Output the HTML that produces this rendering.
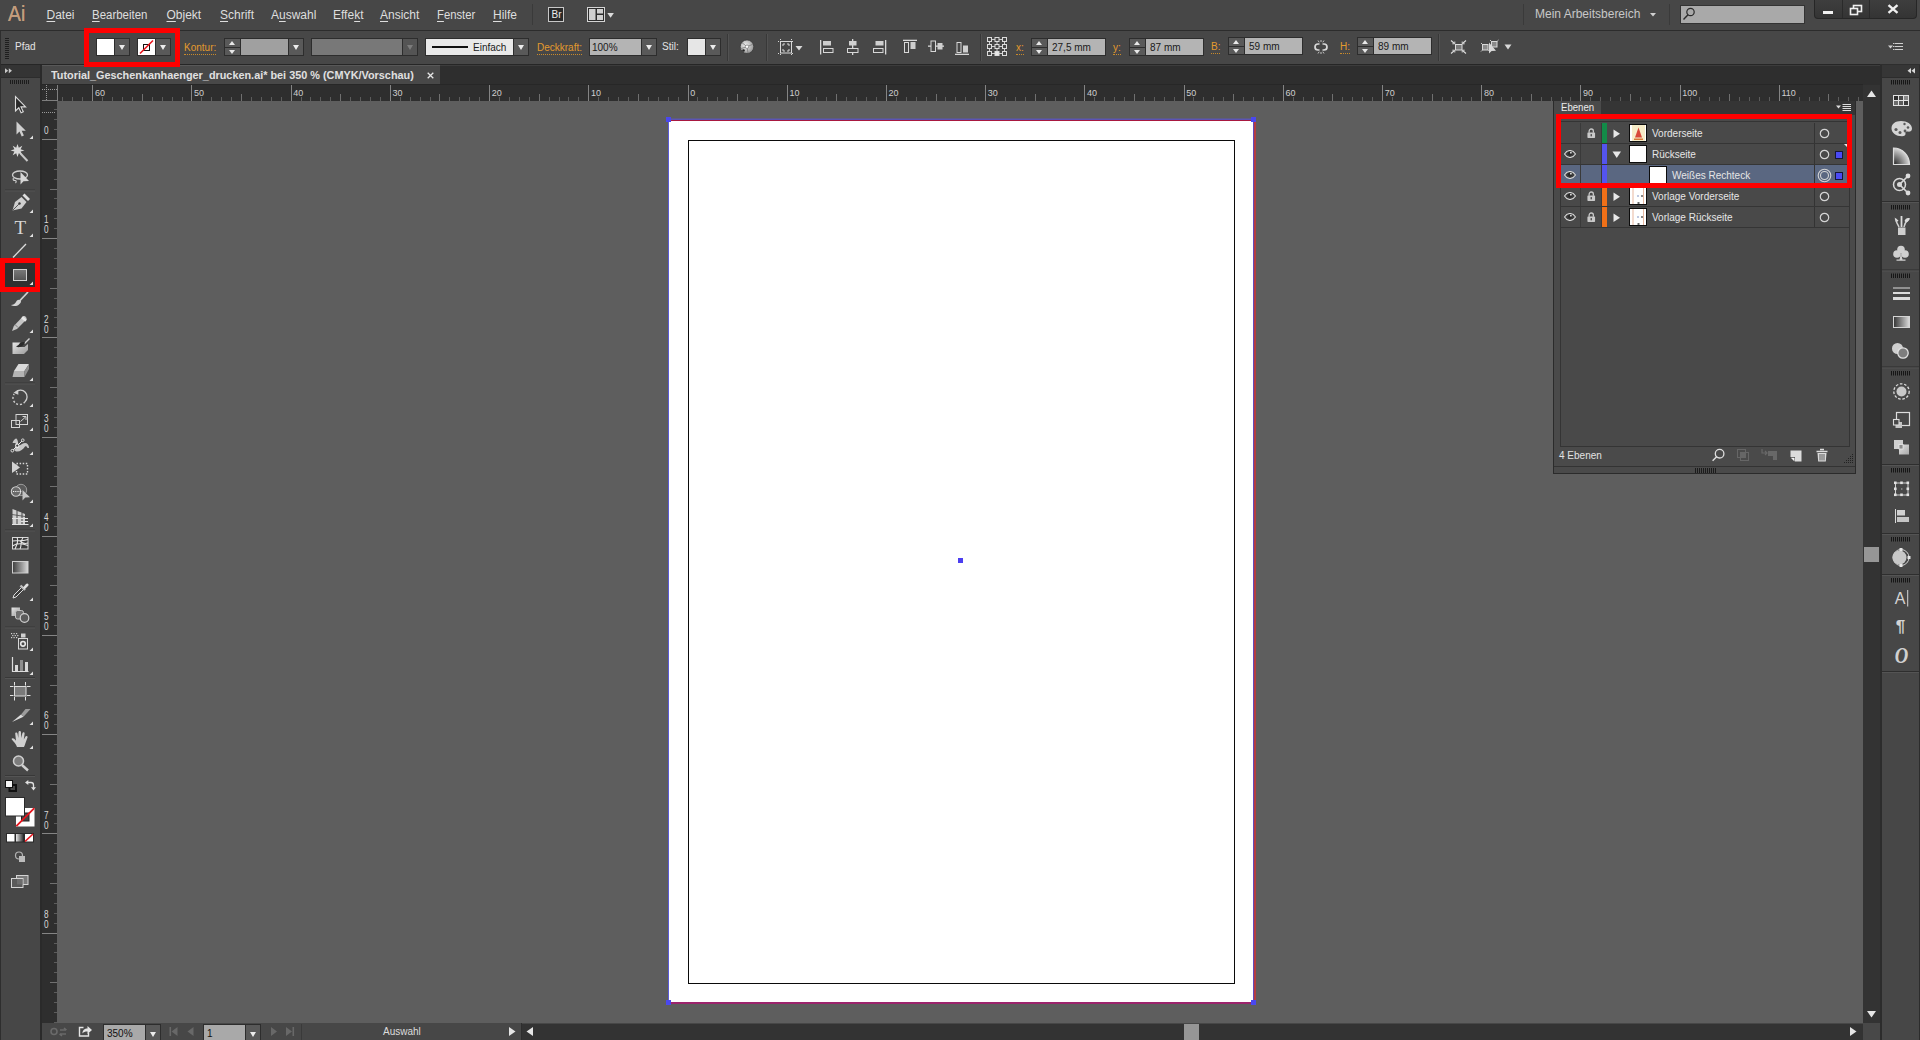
<!DOCTYPE html>
<html lang="de">
<head>
<meta charset="utf-8">
<title>Adobe Illustrator</title>
<style>
*{box-sizing:border-box;margin:0;padding:0}
html,body{width:1920px;height:1040px;overflow:hidden;background:#5e5e5e;font-family:"Liberation Sans",sans-serif;font-size:11px;color:#e0e0e0}
.abs{position:absolute}
#menubar{position:absolute;left:0;top:0;width:1920px;height:30px;background:#474747}
#ctrl{position:absolute;left:0;top:30px;width:1920px;height:35px;background:#474747;border-top:1px solid #2c2c2c;border-bottom:1px solid #2e2e2e}
#tabbar{position:absolute;left:0;top:64px;width:1880px;height:21px;background:#2e2e2e;border-top:1px solid #262626}
#tab{position:absolute;left:42px;top:65px;width:398px;height:19px;background:#484848;border-top:1px solid #585858}
#hruler{position:absolute;left:42px;top:84px;width:1821px;height:17px;background:#2e2e2e;border-top:1px solid #272727;z-index:2}
#vruler{position:absolute;left:42px;top:100px;width:15px;height:923px;background:#2e2e2e}
#canvas{position:absolute;left:57px;top:100px;width:1806px;height:923px;background:#5e5e5e}
#tools{position:absolute;left:0;top:65px;width:42px;height:975px;background:#474747}
#status{position:absolute;left:42px;top:1023px;width:1838px;height:17px;background:#474747}
#vscroll{position:absolute;left:1863px;top:85px;width:17px;height:938px;background:#333}
#dock{position:absolute;left:1880px;top:65px;width:40px;height:975px;background:#474747}

.t{position:absolute;white-space:nowrap;transform-origin:0 0;display:block;line-height:1}
#menubar .mi{font-size:12px;color:#dedede;top:9px}
.mi u{text-decoration:underline;text-underline-offset:1.5px;text-decoration-thickness:1px}

#ctrl .bx{position:absolute;top:7px;height:18px;border:1px solid #2d2d2d}
#ctrl .dd{position:absolute;top:7px;height:18px;width:16px;border:1px solid #2d2d2d;background:#595959}
#ctrl .dd:after{content:"";position:absolute;left:3.5px;top:5.5px;border-left:3.5px solid transparent;border-right:3.5px solid transparent;border-top:5px solid #ececec}
#ctrl .dd.dis{background:#545454}
#ctrl .dd.dis:after{border-top-color:#7c7c7c}
#ctrl .sp{position:absolute;top:7px;height:18px;width:17px;border:1px solid #2d2d2d;background:#595959}
#ctrl .sp:before{content:"";position:absolute;left:4px;top:2px;border-left:3.5px solid transparent;border-right:3.5px solid transparent;border-bottom:4px solid #e8e8e8}
#ctrl .sp:after{content:"";position:absolute;left:4px;top:10.5px;border-left:3.5px solid transparent;border-right:3.5px solid transparent;border-top:4px solid #e8e8e8}
#ctrl .sp i{position:absolute;left:0;top:7.5px;width:15px;height:1px;background:#2d2d2d}
#ctrl .lb{font-size:10px;color:#e39a2e;top:12px;border-bottom:1px dotted #c98a2a;padding-bottom:1px}
#ctrl .fv{font-size:10px;color:#1a1a1a;top:12px}
#ctrl .sep{position:absolute;top:3px;width:2px;height:27px;border-left:1px solid #383838;border-right:1px solid #525252}

#status .f{position:absolute;top:1px;height:17px;background:#a9a9a9;border:1px solid #2d2d2d}
#status .d{position:absolute;top:1px;height:17px;width:16px;background:#595959;border:1px solid #2d2d2d}
#status .d:after{content:"";position:absolute;left:3.5px;top:6.5px;border-left:3.5px solid transparent;border-right:3.5px solid transparent;border-top:5px solid #ececec}

#lp{position:absolute;left:1553px;top:85px;width:303px;height:389px;background:#4a4a4a;border:1px solid #2b2b2b}
#lp .row{position:absolute;left:0;width:288px;height:21px;border-bottom:1px solid #353535}
#lp .nm{font-size:10px;color:#e6e6e6;top:6px}
#lp .c1{position:absolute;left:19px;top:0;width:1px;height:20px;background:#3a3a3a}
#lp .c2{position:absolute;left:40px;top:0;width:1px;height:20px;background:#3a3a3a}
#lp .c3{position:absolute;left:253px;top:0;width:1px;height:20px;background:#333}
#lp .cb{position:absolute;left:41px;top:0;width:5px;height:20px}
#lp .th{position:absolute;top:1px;width:18px;height:18px;border:1px solid #0c0c0c;background:#fff;overflow:hidden}
</style>
</head>
<body>
<div id="menubar">
<span class="t" style="left:8px;top:3px;font-size:22px;color:#c39d7c;transform:scaleX(.88);text-shadow:0 0 .6px #c39d7c">Ai</span>
<span class="t mi" style="left:46.5px"><u>D</u>atei</span>
<span class="t mi" style="left:92px;transform:scaleX(.955)"><u>B</u>earbeiten</span>
<span class="t mi" style="left:166.5px"><u>O</u>bjekt</span>
<span class="t mi" style="left:220px"><u>S</u>chrift</span>
<span class="t mi" style="left:271px">A<u>u</u>swahl</span>
<span class="t mi" style="left:333px">Effe<u>k</u>t</span>
<span class="t mi" style="left:380px"><u>A</u>nsicht</span>
<span class="t mi" style="left:437px;transform:scaleX(.94)"><u>F</u>enster</span>
<span class="t mi" style="left:493px"><u>H</u>ilfe</span>
<div class="abs" style="left:532px;top:4px;width:1px;height:21px;background:#3a3a3a"></div>
<div class="abs" style="left:548px;top:7px;width:16px;height:15px;border:1px solid #c8c8c8;background:#2a2a2a"></div>
<span class="t" style="left:551.500px;top:9.600px;font-size:10px;color:#ececec">Br</span>
<svg class="abs" style="left:587px;top:7px" width="30" height="16" viewBox="0 0 30 16"><rect x=".500" y=".500" width="17" height="14" fill="#2c2c2c" stroke="#d4d4d4"/><rect x="2" y="2" width="6.500" height="11" fill="#d0d0d0"/><rect x="10" y="2" width="6" height="4.500" fill="#d0d0d0"/><rect x="10" y="8" width="6" height="5" fill="#d0d0d0"/><path d="M20.300 6h6.600l-3.300 4.800z" fill="#dcdcdc"/></svg>
<span class="t" style="left:1535px;top:8px;font-size:12px;color:#c8c8c8">Mein Arbeitsbereich</span>
<svg class="abs" style="left:1650px;top:13px" width="7" height="4"><path d="M0 0h6l-3 3.5z" fill="#d0d0d0"/></svg>
<div class="abs" style="left:1523px;top:4px;width:1px;height:21px;background:#3a3a3a"></div>
<div class="abs" style="left:1669px;top:4px;width:1px;height:21px;background:#3a3a3a"></div>
<div class="abs" style="left:1680px;top:5px;width:125px;height:19px;background:#a9a9a9;border:1px solid #333"></div>
<svg class="abs" style="left:1682px;top:6px" width="16" height="16" viewBox="0 0 16 16"><circle cx="8.500" cy="6" r="3.700" fill="none" stroke="#2a2a2a" stroke-width="1.200"/><path d="M6 8.800L1.500 13.500" stroke="#2a2a2a" stroke-width="1.400"/></svg>
<div class="abs" style="left:1814px;top:0;width:103px;height:19px;background:linear-gradient(#3e3e3e,#343434);border:1px solid #262626;border-top:none;border-radius:0 0 4px 4px"></div>
<div class="abs" style="left:1842px;top:0;width:1px;height:18px;background:#2a2a2a"></div>
<div class="abs" style="left:1869px;top:0;width:1px;height:18px;background:#2a2a2a"></div>
<div class="abs" style="left:1823px;top:11px;width:10px;height:3px;background:#f0f0f0"></div>
<svg class="abs" style="left:1849px;top:4px" width="14" height="12" viewBox="0 0 14 12"><rect x="4.5" y="1.5" width="8" height="6" fill="none" stroke="#f0f0f0" stroke-width="1.6"/><rect x="1.5" y="4.5" width="7" height="6" fill="#3b3b3b" stroke="#f0f0f0" stroke-width="1.6"/></svg>
<svg class="abs" style="left:1887px;top:4px" width="12" height="10" viewBox="0 0 12 10"><path d="M1.500 1.200L10.500 8.800M10.500 1.200L1.500 8.800" stroke="#f0f0f0" stroke-width="2.400"/></svg>
</div>
<div id="ctrl">
<svg class="abs" style="left:5px;top:7px" width="4" height="21"><g fill="#1e1e1e"><rect y="0" width="4" height="1"/><rect y="2" width="4" height="1"/><rect y="4" width="4" height="1"/><rect y="6" width="4" height="1"/><rect y="8" width="4" height="1"/><rect y="10" width="4" height="1"/><rect y="12" width="4" height="1"/><rect y="14" width="4" height="1"/><rect y="16" width="4" height="1"/><rect y="18" width="4" height="1"/><rect y="20" width="4" height="1"/></g></svg>
<span class="t" style="left:15px;top:11px;font-size:10px;color:#e4e4e4">Pfad</span>
<div class="bx" style="left:96px;width:19px;background:#fff"></div><div class="dd" style="left:114px"></div>
<div class="bx" style="left:137px;width:19px;background:#fff"></div><div class="dd" style="left:155px"></div>
<svg class="abs" style="left:138px;top:8px" width="17" height="16" viewBox="0 0 17 16"><rect x="5.5" y="5.500" width="6" height="6" fill="none" stroke="#111" stroke-width="1"/><path d="M2 14.500L15 1.500" stroke="#e8141c" stroke-width="1.600"/></svg>
<span class="t lb" style="left:184px">Kontur:</span>
<div class="sp" style="left:224px"><i></i></div><div class="bx" style="left:240px;width:49px;background:#a0a0a0"></div><div class="dd" style="left:288px"></div>
<div class="bx" style="left:311px;width:92px;background:#787878"></div><div class="dd dis" style="left:402px"></div>
<div class="bx" style="left:425px;width:89px;background:#e9e9e9"></div><div class="dd" style="left:513px"></div>
<div class="abs" style="left:432px;top:15px;width:36px;height:2px;background:#111"></div>
<span class="t fv" style="left:473px">Einfach</span>
<span class="t lb" style="left:537px">Deckkraft:</span>
<div class="bx" style="left:589px;width:53px;background:#b4b4b4"></div><div class="dd" style="left:641px"></div>
<span class="t fv" style="left:592px">100%</span>
<span class="t" style="left:662px;top:11px;font-size:10px;color:#e4e4e4">Stil:</span>
<div class="bx" style="left:687px;width:20px;background:#e6e6e6"></div><div class="dd" style="left:705px"></div>
<div class="sep" style="left:727px"></div>
<div class="sep" style="left:766px"></div>
<div class="sep" style="left:980px"></div>
<div class="sep" style="left:1438px"></div>
<span class="t lb" style="left:1016px">x:</span>
<div class="sp" style="left:1031px"><i></i></div><div class="bx" style="left:1047px;width:59px;background:#b4b4b4"></div><span class="t fv" style="left:1052px">27,5 mm</span>
<span class="t lb" style="left:1113px">y:</span>
<div class="sp" style="left:1129px"><i></i></div><div class="bx" style="left:1145px;width:59px;background:#b4b4b4"></div><span class="t fv" style="left:1150px">87 mm</span>
<span class="t lb" style="left:1211px;top:11px">B:</span>
<div class="sp" style="left:1228px;top:6px"><i></i></div><div class="bx" style="left:1244px;top:6px;width:59px;background:#b4b4b4"></div><span class="t fv" style="left:1249px;top:11px">59 mm</span>
<span class="t lb" style="left:1340px;top:11px">H:</span>
<div class="sp" style="left:1357px;top:6px"><i></i></div><div class="bx" style="left:1373px;top:6px;width:59px;background:#b4b4b4"></div><span class="t fv" style="left:1378px;top:11px">89 mm</span>
</div>
<!--CTRL_START--><svg class="abs" style="left:0;top:31px" width="1920" height="33" viewBox="0 31 1920 33"><defs><radialGradient id="cg" cx=".4" cy=".4" r=".7"><stop offset="0" stop-color="#f0f0f0"/><stop offset="1" stop-color="#8a8a8a"/></radialGradient></defs><circle cx="747" cy="46.700" r="6.800" fill="url(#cg)" stroke="#3a3a3a" stroke-width=".8"/><path d="M747 46.700l-5-4M747 46.700l6-2.500M747 46.700l1 6.500M747 46.700l-6.500 2" stroke="#7a7a7a" stroke-width=".8"/><circle cx="747" cy="46.700" r="1.700" fill="#fff" stroke="#666" stroke-width=".6"/><circle cx="743.500" cy="50.500" r="1.300" fill="#222"/><rect x="780.500" y="41.500" width="11" height="11.500" fill="none" stroke="#d8d8d8" stroke-width="1"/><path d="M778 41.500h2M792 41.500h2M778 53.500h2M792 53.500h2M780.500 39v2M791.500 39v2M780.500 54v2M791.500 54v2" stroke="#d8d8d8" stroke-width="1" stroke-dasharray="1 1"/><path d="M783 44h2M787 44h2M783 51h2M787 51h2M783 44v2M789 44v2M783 49v2M789 49v2" stroke="#d8d8d8" stroke-width="1"/><path d="M795.500 46h7l-3.500 4.500z" fill="#d8d8d8"/><rect x="820" y="40" width="1.300" height="14.500" fill="#d8d8d8"/><rect x="823" y="41" width="8" height="4.500" fill="#cfcfcf"/><rect x="823.500" y="48.500" width="9.500" height="4" fill="none" stroke="#d8d8d8"/><rect x="852" y="39" width="1.300" height="16" fill="#d8d8d8"/><rect x="849" y="41" width="7.500" height="4.500" fill="#cfcfcf"/><rect x="847.500" y="48.500" width="10.500" height="4" fill="#474747" stroke="#d8d8d8"/><rect x="885" y="40" width="1.300" height="14.500" fill="#d8d8d8"/><rect x="875.500" y="41" width="8" height="4.500" fill="#cfcfcf"/><rect x="873.500" y="48.500" width="9.500" height="4" fill="none" stroke="#d8d8d8"/><rect x="903" y="39.700" width="14" height="1.300" fill="#d8d8d8"/><rect x="904.500" y="42.500" width="4" height="10" fill="none" stroke="#d8d8d8"/><rect x="910.500" y="42" width="5" height="7" fill="#cfcfcf"/><rect x="928" y="45.500" width="16" height="1.300" fill="#d8d8d8"/><rect x="931" y="41" width="4.500" height="10.500" fill="#474747" stroke="#d8d8d8"/><rect x="937.500" y="43" width="5" height="6.500" fill="#cfcfcf"/><rect x="955" y="53.700" width="14" height="1.300" fill="#d8d8d8"/><rect x="957" y="42.500" width="4" height="10" fill="none" stroke="#d8d8d8"/><rect x="963" y="45.500" width="5" height="7" fill="#cfcfcf"/><path d="M989.500 39.500h15M989.500 46.500h15M989.500 53.500h15M989.500 39.500v14M997 39.500v14M1004.500 39.500v14" stroke="#cfcfcf" stroke-width="1" fill="none"/><rect x="987.5" y="37.5" width="4" height="4" fill="#474747" stroke="#dcdcdc" stroke-width="1"/><rect x="995" y="37.5" width="4" height="4" fill="#474747" stroke="#dcdcdc" stroke-width="1"/><rect x="1002.5" y="37.5" width="4" height="4" fill="#474747" stroke="#dcdcdc" stroke-width="1"/><rect x="987.5" y="44.5" width="4" height="4" fill="#474747" stroke="#dcdcdc" stroke-width="1"/><rect x="995" y="44.5" width="4" height="4" fill="#474747" stroke="#dcdcdc" stroke-width="1"/><rect x="1002.5" y="44.5" width="4" height="4" fill="#474747" stroke="#dcdcdc" stroke-width="1"/><rect x="987.5" y="51.5" width="4" height="4" fill="#474747" stroke="#dcdcdc" stroke-width="1"/><rect x="995" y="51.5" width="4" height="4" fill="#e8e8e8" stroke="#dcdcdc" stroke-width="1"/><rect x="1002.5" y="51.5" width="4" height="4" fill="#474747" stroke="#dcdcdc" stroke-width="1"/><path d="M1319.500 44h-1.500a3 3 0 0 0 0 6h1.500M1322.500 44h1.500a3 3 0 0 1 0 6h-1.500" fill="none" stroke="#d8d8d8" stroke-width="1.700"/><path d="M1318 40.500l1.200 1.800M1321 40v2M1324 40.500l-1.200 1.800M1318 53.500l1.200-1.800M1321 54v-2M1324 53.500l-1.200-1.800" stroke="#d0d0d0" stroke-width=".9"/><rect x="1455.500" y="44.500" width="6.500" height="5.500" fill="#7a7a7a" stroke="#dcdcdc"/><path d="M1451 40.500l3.500 3M1466 40.500l-3.500 3M1451 53.500l3.500-3M1466 53.500l-3.500-3" stroke="#dcdcdc" stroke-width="1.100"/><path d="M1454.800 41.500v2.300h-2.500M1462.200 41.500v2.300h2.500M1454.800 52.500v-2.300h-2.500M1462.200 52.500v-2.300h2.500" stroke="#dcdcdc" stroke-width=".9" fill="none"/><rect x="1482.500" y="44.500" width="5.500" height="5.500" fill="#8a8a8a" stroke="#d8d8d8"/><rect x="1491.500" y="41.500" width="5.500" height="5.500" fill="#8a8a8a" stroke="#d8d8d8"/><path d="M1481 43l1.200 1.200M1481 51.500l1.200-1.200M1489.500 51.500l-1.200-1.200M1490 40l1.200 1.200M1498.500 40l-1.200 1.200" stroke="#d8d8d8" stroke-width=".9"/><path d="M1489 42.500v11l2.600-2.500 4.400-.2z" fill="#d8d8d8"/><path d="M1504.500 44.500h7l-3.500 5z" fill="#d8d8d8"/><path d="M1888 45.500h5l-2.500 3z" fill="#d0d0d0"/><path d="M1894.500 43.500h8.500M1894.500 46.500h8.500M1894.500 49.500h8.500" stroke="#d0d0d0" stroke-width="1.200"/><path d="M1893 43.500h1M1893 46.500h1M1893 49.500h1" stroke="#d0d0d0" stroke-width="1.200"/></svg><!--CTRL_END-->
<div id="tabbar"><div class="abs" style="left:0;top:0;width:1880px;height:1px;background:#3c3c3c"></div></div>
<div id="tab"><span class="t" style="left:9px;top:4px;font-size:10.500px;font-weight:bold;color:#e0e0e0;transform:scaleX(1.034)">Tutorial_Geschenkanhaenger_drucken.ai* bei 350 % (CMYK/Vorschau)</span>
<svg class="abs" style="left:385px;top:6px" width="7" height="7" viewBox="0 0 7 7"><path d="M.700 .700L6.300 6.300M6.300 .700L.700 6.300" stroke="#e6e6e6" stroke-width="1.300"/></svg></div>
<div id="hruler"></div>
<div id="vruler"></div>
<!--HR_START--><svg class="abs" style="left:57px;top:85px;z-index:3" width="1806" height="16" viewBox="0 0 1806 16"><path d="M5.5 12v4M15.5 12v4M25.5 12v4M45.5 12v4M55.5 12v4M65.5 12v4M75.5 12v4M95.5 12v4M105.5 12v4M115.5 12v4M125.5 12v4M144.5 12v4M154.5 12v4M164.5 12v4M174.5 12v4M194.5 12v4M204.5 12v4M214.5 12v4M224.5 12v4M244.5 12v4M253.5 12v4M263.5 12v4M273.5 12v4M293.5 12v4M303.5 12v4M313.5 12v4M323.5 12v4M343.5 12v4M353.5 12v4M363.5 12v4M373.5 12v4M392.5 12v4M402.5 12v4M412.5 12v4M422.5 12v4M442.5 12v4M452.5 12v4M462.5 12v4M472.5 12v4M492.5 12v4M502.5 12v4M511.5 12v4M521.5 12v4M541.5 12v4M551.5 12v4M561.5 12v4M571.5 12v4M591.5 12v4M601.5 12v4M611.5 12v4M621.5 12v4M640.5 12v4M650.5 12v4M660.5 12v4M670.5 12v4M690.5 12v4M700.5 12v4M710.5 12v4M720.5 12v4M740.5 12v4M750.5 12v4M759.5 12v4M769.5 12v4M789.5 12v4M799.5 12v4M809.5 12v4M819.5 12v4M839.5 12v4M849.5 12v4M859.5 12v4M869.5 12v4M888.5 12v4M898.5 12v4M908.5 12v4M918.5 12v4M938.5 12v4M948.5 12v4M958.5 12v4M968.5 12v4M988.5 12v4M998.5 12v4M1008.5 12v4M1017.5 12v4M1037.5 12v4M1047.5 12v4M1057.5 12v4M1067.5 12v4M1087.5 12v4M1097.5 12v4M1107.5 12v4M1117.5 12v4M1136.5 12v4M1146.5 12v4M1156.5 12v4M1166.5 12v4M1186.5 12v4M1196.5 12v4M1206.5 12v4M1216.5 12v4M1236.5 12v4M1246.5 12v4M1256.5 12v4M1265.5 12v4M1285.5 12v4M1295.5 12v4M1305.5 12v4M1315.5 12v4M1335.5 12v4M1345.5 12v4M1355.5 12v4M1365.5 12v4M1385.5 12v4M1394.5 12v4M1404.5 12v4M1414.5 12v4M1434.5 12v4M1444.5 12v4M1454.5 12v4M1464.5 12v4M1484.5 12v4M1494.5 12v4M1504.5 12v4M1513.5 12v4M1533.5 12v4M1543.5 12v4M1553.5 12v4M1563.5 12v4M1583.5 12v4M1593.5 12v4M1603.5 12v4M1613.5 12v4M1633.5 12v4M1642.5 12v4M1652.5 12v4M1662.5 12v4M1682.5 12v4M1692.5 12v4M1702.5 12v4M1712.5 12v4M1732.5 12v4M1742.5 12v4M1752.5 12v4M1762.5 12v4M1781.5 12v4M1791.5 12v4M1801.5 12v4" stroke="#5c5c5c" stroke-width="1" fill="none"/><path d="M85.5 9v7M184.5 9v7M283.5 9v7M382.5 9v7M482.5 9v7M581.5 9v7M680.5 9v7M779.5 9v7M879.5 9v7M978.5 9v7M1077.5 9v7M1176.5 9v7M1275.5 9v7M1375.5 9v7M1474.5 9v7M1573.5 9v7M1672.5 9v7M1771.5 9v7" stroke="#707070" stroke-width="1" fill="none"/><path d="M35.5 0v16M134.5 0v16M234.5 0v16M333.5 0v16M432.5 0v16M531.5 0v16M631.5 0v16M730.5 0v16M829.5 0v16M928.5 0v16M1027.5 0v16M1127.5 0v16M1226.5 0v16M1325.5 0v16M1424.5 0v16M1523.5 0v16M1623.5 0v16M1722.5 0v16" stroke="#848484" stroke-width="1" fill="none"/><g font-family="Liberation Sans, sans-serif" font-size="9" fill="#cfcfcf"><text x="37.9" y="10.5">60</text><text x="137.1" y="10.5">50</text><text x="236.3" y="10.5">40</text><text x="335.6" y="10.5">30</text><text x="434.8" y="10.5">20</text><text x="534.0" y="10.5">10</text><text x="633.2" y="10.5">0</text><text x="732.4" y="10.5">10</text><text x="831.6" y="10.5">20</text><text x="930.8" y="10.5">30</text><text x="1030.1" y="10.5">40</text><text x="1129.3" y="10.5">50</text><text x="1228.5" y="10.5">60</text><text x="1327.7" y="10.5">70</text><text x="1426.9" y="10.5">80</text><text x="1526.1" y="10.5">90</text><text x="1625.3" y="10.5">100</text><text x="1724.5" y="10.5">110</text></g></svg><!--HR_END-->
<!--VR_START--><svg class="abs" style="left:42px;top:100px" width="15" height="923" viewBox="0 0 15 923"><path d="M12 9.5h3M12 19.5h3M12 29.5h3M12 49.5h3M12 59.5h3M12 69.5h3M12 79.5h3M12 98.5h3M12 108.5h3M12 118.5h3M12 128.5h3M12 148.5h3M12 158.5h3M12 168.5h3M12 178.5h3M12 198.5h3M12 208.5h3M12 217.5h3M12 227.5h3M12 247.5h3M12 257.5h3M12 267.5h3M12 277.5h3M12 297.5h3M12 307.5h3M12 317.5h3M12 327.5h3M12 346.5h3M12 356.5h3M12 366.5h3M12 376.5h3M12 396.5h3M12 406.5h3M12 416.5h3M12 426.5h3M12 446.5h3M12 456.5h3M12 466.5h3M12 475.5h3M12 495.5h3M12 505.5h3M12 515.5h3M12 525.5h3M12 545.5h3M12 555.5h3M12 565.5h3M12 575.5h3M12 594.5h3M12 604.5h3M12 614.5h3M12 624.5h3M12 644.5h3M12 654.5h3M12 664.5h3M12 674.5h3M12 694.5h3M12 704.5h3M12 714.5h3M12 723.5h3M12 743.5h3M12 753.5h3M12 763.5h3M12 773.5h3M12 793.5h3M12 803.5h3M12 813.5h3M12 823.5h3M12 843.5h3M12 852.5h3M12 862.5h3M12 872.5h3M12 892.5h3M12 902.5h3M12 912.5h3M12 922.5h3" stroke="#5c5c5c" stroke-width="1" fill="none"/><path d="M8 89.5h7M8 188.5h7M8 287.5h7M8 386.5h7M8 485.5h7M8 585.5h7M8 684.5h7M8 783.5h7M8 882.5h7" stroke="#707070" stroke-width="1" fill="none"/><path d="M0 39.5h15M0 138.5h15M0 237.5h15M0 337.5h15M0 436.5h15M0 535.5h15M0 634.5h15M0 733.5h15M0 833.5h15" stroke="#848484" stroke-width="1" fill="none"/><g font-family="Liberation Sans, sans-serif" font-size="10" fill="#d8d8d8" text-anchor="middle"><text transform="translate(4.3 34.1) scale(.82 1)">0</text><text transform="translate(4.3 123.3) scale(.82 1)">1</text><text transform="translate(4.3 133.3) scale(.82 1)">0</text><text transform="translate(4.3 222.5) scale(.82 1)">2</text><text transform="translate(4.3 232.5) scale(.82 1)">0</text><text transform="translate(4.3 321.7) scale(.82 1)">3</text><text transform="translate(4.3 331.7) scale(.82 1)">0</text><text transform="translate(4.3 421.0) scale(.82 1)">4</text><text transform="translate(4.3 431.0) scale(.82 1)">0</text><text transform="translate(4.3 520.2) scale(.82 1)">5</text><text transform="translate(4.3 530.2) scale(.82 1)">0</text><text transform="translate(4.3 619.4) scale(.82 1)">6</text><text transform="translate(4.3 629.4) scale(.82 1)">0</text><text transform="translate(4.3 718.6) scale(.82 1)">7</text><text transform="translate(4.3 728.6) scale(.82 1)">0</text><text transform="translate(4.3 817.8) scale(.82 1)">8</text><text transform="translate(4.3 827.8) scale(.82 1)">0</text></g></svg><!--VR_END-->
<svg class="abs" style="left:42px;top:85px;z-index:3" width="16" height="30" viewBox="0 0 16 30"><path d="M0 4.500h15M4.500 0v15M0 27.500h13" stroke="#9a9a9a" stroke-width="1" stroke-dasharray="1 1" fill="none"/><path d="M15.500 0v16M0 15.500h15" stroke="#7e7e7e"/></svg>
<div id="canvas">
<div class="abs" style="left:612px;top:21px;width:584px;height:881px;background:#fff"></div>
<div class="abs" style="left:611px;top:18px;width:586px;height:1px;background:#5c58a8;opacity:.55"></div>
<div class="abs" style="left:611px;top:19px;width:586px;height:1px;background:#5a54b4"></div>
<div class="abs" style="left:612px;top:20px;width:585px;height:1px;background:#a81840"></div>
<div class="abs" style="left:611px;top:19px;width:1px;height:885px;background:#5c5cd8"></div>
<div class="abs" style="left:1196px;top:20px;width:1px;height:884px;background:#6448b8"></div>
<div class="abs" style="left:1197px;top:20px;width:2px;height:884px;background:#b43c40"></div>
<div class="abs" style="left:612px;top:902px;width:585px;height:2px;background:#9c246c"></div>
<div class="abs" style="left:631px;top:40px;width:547px;height:844px;border:1px solid #0a0a0a"></div>
<div class="abs" style="left:609px;top:17px;width:5px;height:5px;background:#4a48ee"></div>
<div class="abs" style="left:1194px;top:17px;width:5px;height:5px;background:#4a48ee"></div>
<div class="abs" style="left:609px;top:900px;width:5px;height:5px;background:#4a48ee"></div>
<div class="abs" style="left:1194px;top:900px;width:5px;height:5px;background:#4a48ee"></div>
<div class="abs" style="left:901px;top:458px;width:5px;height:5px;background:#4c3ef0"></div>
</div>
<div id="tools"></div>
<!--TOOLS_START--><svg class="abs" style="left:0;top:65px" width="42" height="975" viewBox="0 65 42 975"><defs><linearGradient id="gl" x1="0" y1="0" x2="1" y2="1"><stop offset="0" stop-color="#e6e6e6"/><stop offset="1" stop-color="#9a9a9a"/></linearGradient><linearGradient id="gh" x1="0" y1="0" x2="1" y2="0"><stop offset="0" stop-color="#3c3c3c"/><stop offset="1" stop-color="#d8d8d8"/></linearGradient><linearGradient id="gv" x1="0" y1="0" x2="0" y2="1"><stop offset="0" stop-color="#7a7a7a"/><stop offset="1" stop-color="#555"/></linearGradient></defs><rect x="0" y="65" width="40" height="12" fill="#343434"/><rect x="0" y="77" width="40" height="1" fill="#2c2c2c"/><path d="M5 68.300v5l3.200-2.500zM8.800 68.300v5l3.200-2.500z" fill="#c8c8c8"/><path d="M10.5 80v4M12.5 80v4M14.5 80v4M16.5 80v4M18.5 80v4M20.5 80v4M22.5 80v4M24.5 80v4M26.5 80v4M28.5 80v4" stroke="#1c1c1c"/><rect x="5" y="189.5" width="30" height="1" fill="#383838"/><rect x="5" y="190.5" width="30" height="1" fill="#545454"/><rect x="5" y="382.5" width="30" height="1" fill="#383838"/><rect x="5" y="383.5" width="30" height="1" fill="#545454"/><rect x="5" y="529.5" width="30" height="1" fill="#383838"/><rect x="5" y="530.5" width="30" height="1" fill="#545454"/><rect x="5" y="626.5" width="30" height="1" fill="#383838"/><rect x="5" y="627.5" width="30" height="1" fill="#545454"/><rect x="5" y="677.0" width="30" height="1" fill="#383838"/><rect x="5" y="678.0" width="30" height="1" fill="#545454"/><rect x="5" y="775.0" width="30" height="1" fill="#383838"/><rect x="5" y="776.0" width="30" height="1" fill="#545454"/><rect x="5" y="263" width="30" height="24" fill="#303030"/><path d="M33 135.5v3.500h-3.500z" fill="#e0e0e0"/><path d="M33 209.5v3.500h-3.500z" fill="#e0e0e0"/><path d="M33 233.5v3.500h-3.500z" fill="#e0e0e0"/><path d="M33 281.5v3.500h-3.500z" fill="#e0e0e0"/><path d="M33 329.5v3.500h-3.500z" fill="#e0e0e0"/><path d="M33 377.5v3.500h-3.500z" fill="#e0e0e0"/><path d="M33 403.5v3.500h-3.500z" fill="#e0e0e0"/><path d="M33 427.5v3.500h-3.500z" fill="#e0e0e0"/><path d="M33 451.5v3.500h-3.500z" fill="#e0e0e0"/><path d="M33 499.5v3.500h-3.500z" fill="#e0e0e0"/><path d="M33 523.5v3.500h-3.500z" fill="#e0e0e0"/><path d="M33 597.5v3.500h-3.500z" fill="#e0e0e0"/><path d="M33 647.5v3.500h-3.500z" fill="#e0e0e0"/><path d="M33 671.5v3.500h-3.500z" fill="#e0e0e0"/><path d="M33 721.5v3.500h-3.500z" fill="#e0e0e0"/><path d="M33 745.5v3.500h-3.500z" fill="#e0e0e0"/><path d="M15.500 96.500v14.500l3.300-3.200 2.300 5 2.200-1-2.300-4.900h4.600z" fill="#2a2a2a" stroke="#dcdcdc" stroke-width="1.100" stroke-linejoin="miter"/><path d="M16.500 121.500v13l3-2.900 2.200 5 2.200-1-2.200-4.800h4.100z" fill="#cfcfcf"/><path d="M17.500 144l1.300 3.700 3.500-2-1.700 3.500 3.900 1.300-3.900 1.100 1.700 3.600-3.500-1.900-1.300 3.700-1.300-3.700-3.500 1.900 1.700-3.600-3.900-1.100 3.900-1.300-1.700-3.500 3.500 2z" fill="#d8d8d8"/><path d="M20.500 153.500l7 7.500" stroke="#c8c8c8" stroke-width="2"/><ellipse cx="20" cy="175" rx="7.500" ry="4" fill="none" stroke="#cfcfcf" stroke-width="1.300"/><path d="M13.500 178c-1 1.500 0 2.500 1.500 2.500s1.500 1.500.5 2.500" fill="none" stroke="#cfcfcf" stroke-width="1.100"/><path d="M20.500 172v12.500l3-3.200 5.500-.3z" fill="#d6d6d6"/><path d="M12.500 210.500l2.500-8.500 6.500-5 5 5-5 6.500z" fill="#cfcfcf"/><path d="M22.500 195.500l2-2 5.500 5.500-2 2z" fill="#dedede"/><circle cx="19.500" cy="203.500" r="1.200" fill="#3a3a3a"/><path d="M12.800 210.200l6-6" stroke="#3a3a3a" stroke-width=".8"/><text x="20.300" y="233.500" font-family="Liberation Serif, serif" font-size="19" fill="#d6d6d6" text-anchor="middle">T</text><path d="M13 257.500l13-13.500" stroke="#dcdcdc" stroke-width="1.300"/><rect x="13.500" y="269.500" width="13" height="11" fill="url(#gv)" stroke="#d0d0d0" stroke-width="1"/><path d="M28 292l-8.500 9" stroke="#d0d0d0" stroke-width="1.800"/><path d="M20.500 300.500c-1.500-1.500-3.500-.5-4.500 1.500s-3 3-5 3c2 1.500 6 1.500 8-.5s2.500-3 1.500-4z" fill="#d4d4d4"/><path d="M12 331l1.800-5 9-9.500c1.500-1.500 5 1.500 3.400 3.300l-9.200 9.200z" fill="#c4c4c4"/><path d="M22 317.300l4 3.500" stroke="#e8e8e8" stroke-width="2.600"/><path d="M15 324.500l3 3" stroke="#7a7a7a" stroke-width="1"/><path d="M12.500 342.500h8l-3 4.500h7l3.500-3v6l-4 4h-11.500z" fill="url(#gl)"/><path d="M29.500 338.500l-5 5" stroke="#d0d0d0" stroke-width="1.500"/><path d="M25 342.500c-2-1-5 0-6.500 2.500l-2.500 1.500c3 1.500 7 .5 9-4z" fill="#2c2c2c"/><path d="M18.500 364h10.500l-4.500 7h-10.500z" fill="#dadada"/><path d="M14 371h10.500v6h-12z" fill="#b4b4b4"/><path d="M24.500 371l4.500-7v5l-4.500 8z" fill="#8e8e8e"/><path d="M15.800 392A6.500 6.500 0 0 1 25 401.700" fill="none" stroke="#cfcfcf" stroke-width="1.300"/><path d="M25 401.700A6.500 6.500 0 1 1 14.200 394" fill="none" stroke="#cfcfcf" stroke-width="1.400" stroke-dasharray="2 1.800"/><path d="M13.500 392.800l4.800-3v5z" fill="#cfcfcf"/><rect x="16" y="414.500" width="11.500" height="10" fill="none" stroke="#d4d4d4" stroke-width="1"/><rect x="11.500" y="420.500" width="8" height="7" fill="none" stroke="#d4d4d4" stroke-width="1"/><path d="M20.500 421.500l5-4.500M22.500 416.500h3.500v3.500" fill="none" stroke="#d4d4d4" stroke-width="1"/><path d="M12.500 443c1-3 2.500-4.500 4-4.500 1.500 1.500 2 5 1.500 8 2-1 4-3.500 7-3.500 2.500 0 4 2 4 5h-1.500c-.5-1.500-1.500-2-2.500-1.500-2 3-5 5.500-9 5l-2-1.500c2-1.500 2.500-4 1.500-7z" fill="#c8c8c8"/><path d="M12.500 450.500l10.500-10.500" stroke="#e8e8e8" stroke-width="1"/><circle cx="12.300" cy="450.700" r="1.300" fill="#3c3c3c" stroke="#e8e8e8" stroke-width=".9"/><circle cx="22.800" cy="440.200" r="1.300" fill="#3c3c3c" stroke="#e8e8e8" stroke-width=".9"/><circle cx="17.300" cy="445.700" r="1.700" fill="#3c3c3c" stroke="#f0f0f0" stroke-width="1.100"/><rect x="16.500" y="463.500" width="11" height="10.500" fill="none" stroke="#d8d8d8" stroke-width="1.400" stroke-dasharray="1.500 1.600"/><path d="M12 461.500v11.500l8-5.500z" fill="#d2d2d2"/><circle cx="21" cy="490" r="5.700" fill="#5a5a5a" stroke="#9a9a9a" stroke-width="1"/><circle cx="16" cy="491.500" r="4.700" fill="#6a6a6a" stroke="#cfcfcf" stroke-width="1.100"/><path d="M13 491.500h9" stroke="#f0f0f0" stroke-width="1.200" stroke-dasharray="1.200 1"/><path d="M22.500 490v10.500l2.800-3 4.700-.3z" fill="#c4c4c4"/><path d="M12.500 509l4 1.500v14h-4zM17.500 511l4 1.500v12h-4zM22.500 513l2.500 1v10.500h-2.500z" fill="#cfcfcf"/><path d="M12 518.500h16M12 524.500h16.500M21 521.500h7" stroke="#e2e2e2" stroke-width="1"/><path d="M12 514.500l13 2" stroke="#4a4a4a" stroke-width=".8"/><rect x="12.500" y="537.500" width="15.500" height="11.500" fill="#3c3c3c" stroke="#d8d8d8"/><path d="M12.500 541c4-1 8 1 15.500-1.500M12.500 546c4-3 9-3 15.500-.5M17 537.500c2 3 0 7-2 11.500M23 537.500c-3 4-1 8-3 11.500M20 541c2 2 5 3 8 2" fill="none" stroke="#e6e6e6" stroke-width="1.100"/><rect x="12.500" y="561.500" width="15.500" height="11.500" fill="url(#gh)" stroke="#cfcfcf"/><path d="M13 598l1-3 8.500-8.500 2 2-8.500 8.500z" fill="#3c3c3c" stroke="#dcdcdc" stroke-width="1"/><path d="M20.500 585.500l4.500 4.500" stroke="#bcbcbc" stroke-width="2.400"/><path d="M23 587.500l3-3.500c1.500-1.500 3.500.5 2 2l-3.300 3.200z" fill="#e0e0e0"/><rect x="11.500" y="607.500" width="8.500" height="8.500" fill="url(#gl)"/><rect x="15.500" y="610.500" width="8" height="8.500" rx="2" fill="#6e6e6e" stroke="#c4c4c4"/><circle cx="24.500" cy="618" r="4.300" fill="#5a5a5a" stroke="#d0d0d0" stroke-width="1.200"/><rect x="18.500" y="638.500" width="9" height="10.500" fill="#4a4a4a" stroke="#d8d8d8"/><rect x="21" y="633.500" width="4.500" height="4" fill="#cfcfcf"/><circle cx="23" cy="643.800" r="2.300" fill="none" stroke="#e6e6e6" stroke-width="1.600"/><g fill="#d0d0d0"><rect x="11" y="633" width="1.200" height="1.200"/><rect x="13.500" y="633" width="1.200" height="1.200"/><rect x="16" y="633" width="1.200" height="1.200"/><rect x="12.200" y="635" width="1.200" height="1.200"/><rect x="14.700" y="635" width="1.200" height="1.200"/><rect x="17.200" y="635" width="1.200" height="1.200"/><rect x="11" y="637" width="1.200" height="1.200"/><rect x="13.500" y="637" width="1.200" height="1.200"/><rect x="16" y="637" width="1.200" height="1.200"/></g><path d="M12.500 657v14.500h16" fill="none" stroke="#dcdcdc" stroke-width="1.200"/><rect x="15" y="665" width="3" height="6" fill="#d8d8d8"/><rect x="20" y="660" width="3" height="11" fill="#8e8e8e"/><rect x="25" y="662" width="3" height="9" fill="#d8d8d8"/><rect x="14.500" y="686.500" width="11.500" height="9.500" fill="#7a7a7a" stroke="#dcdcdc"/><path d="M10 686.500h3.500M27 686.500h3.500M10 695.500h3.500M27 695.500h3.500M14.500 682v3.500M25.500 682v3.500M14.500 697v3.500M25.500 697v3.500" stroke="#e2e2e2" stroke-width="1"/><path d="M12 722l9-7.500 2.500 2.200z" fill="#dcdcdc"/><path d="M21 714.500l4.500-5.500h5l-7 7.700z" fill="#9c9c9c"/><path d="M17 747c-1-3-3.500-5.500-5.500-8 .5-1.200 2-1 3 0l1.500 1.800-.8-7.300c0-1.500 2-1.500 2.300 0l.8 4.500.2-5.800c.2-1.500 2.300-1.500 2.500 0l.2 5.800 1.200-4.800c.4-1.400 2.400-1 2.200.5l-.8 5.800 1.700-3c.8-1.200 2.500-.4 2 1l-2 5.500c-.5 1.500-1 3-1.500 4z" fill="#d0d0d0"/><circle cx="18.500" cy="761" r="5" fill="#7c7c7c" stroke="#cfcfcf" stroke-width="1.500"/><path d="M22 765l6 5.500" stroke="#cfcfcf" stroke-width="2.400"/><rect x="9.500" y="785" width="6.500" height="6" fill="none" stroke="#111" stroke-width="2"/><rect x="5.500" y="780.500" width="7" height="7" fill="#f4f4f4" stroke="#111" stroke-width="1"/><path d="M27.500 782.500h3.500c1.500 0 2.500 1 2.500 2.500v3" fill="none" stroke="#e0e0e0" stroke-width="1.300"/><path d="M25 782.500l3.300-2.500v5zM33.500 790.500l-2.500-3.300h5z" fill="#e0e0e0"/><rect x="16" y="808" width="18.500" height="18.500" fill="#fff"/><rect x="21.500" y="813" width="7.500" height="8" fill="#474747" stroke="#222" stroke-width="1"/><path d="M16.300 826.200l18-18" stroke="#e8141c" stroke-width="1.800"/><rect x="5.500" y="797.500" width="19" height="18.500" fill="#fff" stroke="#2a2a2a" stroke-width="1"/><rect x="6.500" y="833.500" width="8.500" height="8.500" fill="#fff" stroke="#2a2a2a"/><rect x="15.500" y="833.500" width="8.500" height="8.500" fill="url(#ghr)" stroke="#2a2a2a"/><rect x="24.500" y="833.500" width="9" height="8.500" fill="#fff" stroke="#2a2a2a"/><path d="M25 841.500l8-7.500" stroke="#e8141c" stroke-width="1.600"/><defs><linearGradient id="ghr" x1="0" y1="0" x2="1" y2="0"><stop offset="0" stop-color="#f4f4f4"/><stop offset="1" stop-color="#222"/></linearGradient></defs><circle cx="19" cy="855.500" r="3.500" fill="none" stroke="#b4b4b4" stroke-width="1.200"/><rect x="19" y="856" width="6" height="6" fill="#bcbcbc"/><rect x="16.500" y="875.500" width="11.500" height="9" fill="#7a7a7a" stroke="#d4d4d4"/><rect x="11.500" y="878.500" width="11.500" height="9" fill="#5a5a5a" stroke="#d4d4d4"/><rect x="17" y="879" width="6" height="5.500" fill="#7a7a7a" opacity=".6"/></svg><!--TOOLS_END-->
<div class="abs" style="left:0;top:258px;width:40px;height:34px;border:5px solid #fe0000;z-index:5"></div>
<div class="abs" style="left:40px;top:65px;width:2px;height:975px;background:#2a2a2a"></div>
<div class="abs" style="left:0;top:31px;width:1px;height:1009px;background:#2e2e2e"></div>
<div id="status">
<svg class="abs" style="left:7px;top:3px" width="20" height="11" viewBox="0 0 20 11"><g fill="none" stroke="#6a6a6a" stroke-width="1.600"><circle cx="5" cy="5.500" r="3"/><path d="M11 4h6M11 8h6M15 2l2.500 2M13 10l-2.500-2"/></g></svg>
<svg class="abs" style="left:36px;top:2px" width="15" height="12" viewBox="0 0 15 12"><path d="M5.500 2.500h-4v8.500h9v-3" fill="none" stroke="#e4e4e4" stroke-width="1.400"/><path d="M4.500 8.500c0-3.500 2-5 5-5v-2.500l4.500 4-4.500 4v-2.500c-2.500 0-4 .5-5 2z" fill="#e4e4e4"/></svg>
<div class="f" style="left:61px;width:43px"></div><div class="d" style="left:103px"></div>
<span class="t" style="left:65px;top:6px;font-size:10px;color:#111">350%</span>
<svg class="abs" style="left:126px;top:4px" width="130" height="11" viewBox="0 0 130 11" fill="#686868"><rect x="1.500" y="0" width="1.600" height="9"/><path d="M9.500 0v9l-6-4.500z"/><path d="M25.500 0v9l-6-4.500z"/><path d="M103 0v9l6-4.500z"/><path d="M118 0v9l6-4.500z"/><rect x="124.500" y="0" width="1.600" height="9"/></svg>
<div class="f" style="left:161px;width:43px"></div><div class="d" style="left:203px"></div>
<span class="t" style="left:165px;top:6px;font-size:10px;color:#111">1</span>
<div class="abs" style="left:259px;top:1px;width:1px;height:16px;background:#3a3a3a"></div>
<span class="t" style="left:341px;top:4px;font-size:10px;color:#dcdcdc">Auswahl</span>
<svg class="abs" style="left:467px;top:4px" width="8" height="10"><path d="M0 0v9l6.500-4.500z" fill="#e6e6e6"/></svg>
<div class="abs" style="left:479px;top:0;width:1px;height:17px;background:#2e2e2e"></div>
<div class="abs" style="left:480px;top:1px;width:1341px;height:16px;background:#333"></div>
<svg class="abs" style="left:484px;top:4px" width="8" height="10"><path d="M7 0v9l-6.500-4.500z" fill="#e6e6e6"/></svg>
<svg class="abs" style="left:1808px;top:4px" width="8" height="10"><path d="M0 0v9l6.500-4.500z" fill="#e6e6e6"/></svg>
<div class="abs" style="left:1142px;top:1px;width:15px;height:16px;background:#969696"></div>
<div class="abs" style="left:1821px;top:0;width:17px;height:17px;background:#484848"></div>
</div>
<div id="vscroll">
<svg class="abs" style="left:4px;top:5px" width="10" height="8"><path d="M0 7h9l-4.500-6.500z" fill="#e6e6e6"/></svg>
<svg class="abs" style="left:4px;top:926px" width="10" height="8"><path d="M0 0h9l-4.500 6.500z" fill="#e6e6e6"/></svg>
<div class="abs" style="left:1px;top:462px;width:15px;height:15px;background:#969696"></div>
</div>
<div id="dock"></div>
<!--DOCK_START--><svg class="abs" style="left:1880px;top:65px" width="40" height="975" viewBox="1880 65 40 975"><defs><linearGradient id="dg" x1="0" y1="0" x2="1" y2="0"><stop offset="0" stop-color="#333"/><stop offset="1" stop-color="#dcdcdc"/></linearGradient><linearGradient id="dl" x1="0" y1="0" x2="1" y2="1"><stop offset="0" stop-color="#e4e4e4"/><stop offset="1" stop-color="#a8a8a8"/></linearGradient><radialGradient id="dq" cx="0" cy="1" r="1"><stop offset="0" stop-color="#222"/><stop offset="1" stop-color="#d8d8d8"/></radialGradient></defs><rect x="1880" y="65" width="2" height="975" fill="#2c2c2c"/><rect x="1882" y="65" width="38" height="12" fill="#363636"/><rect x="1882" y="77" width="38" height="1" fill="#2c2c2c"/><path d="M1911 68v5.500l-3.500-2.750zM1915 68v5.500l-3.500-2.750z" fill="#d8d8d8"/><rect x="1882" y="201.0" width="38" height="1" fill="#2e2e2e"/><rect x="1882" y="202.0" width="38" height="1" fill="#545454"/><rect x="1882" y="269.5" width="38" height="1" fill="#2e2e2e"/><rect x="1882" y="270.5" width="38" height="1" fill="#545454"/><rect x="1882" y="366.5" width="38" height="1" fill="#2e2e2e"/><rect x="1882" y="367.5" width="38" height="1" fill="#545454"/><rect x="1882" y="464.0" width="38" height="1" fill="#2e2e2e"/><rect x="1882" y="465.0" width="38" height="1" fill="#545454"/><rect x="1882" y="533.0" width="38" height="1" fill="#2e2e2e"/><rect x="1882" y="534.0" width="38" height="1" fill="#545454"/><rect x="1882" y="574.0" width="38" height="1" fill="#2e2e2e"/><rect x="1882" y="575.0" width="38" height="1" fill="#545454"/><rect x="1882" y="671.0" width="38" height="1" fill="#2e2e2e"/><rect x="1882" y="672.0" width="38" height="1" fill="#545454"/><path d="M1891.5 80v4.500M1893.5 80v4.500M1895.5 80v4.500M1897.5 80v4.500M1899.5 80v4.500M1901.5 80v4.500M1903.5 80v4.500M1905.5 80v4.500M1907.5 80v4.500M1909.5 80v4.500" stroke="#161616"/><path d="M1891.5 205v4.500M1893.5 205v4.500M1895.5 205v4.500M1897.5 205v4.500M1899.5 205v4.500M1901.5 205v4.500M1903.5 205v4.500M1905.5 205v4.500M1907.5 205v4.500M1909.5 205v4.500" stroke="#161616"/><path d="M1891.5 273.5v4.500M1893.5 273.5v4.500M1895.5 273.5v4.500M1897.5 273.5v4.500M1899.5 273.5v4.500M1901.5 273.5v4.500M1903.5 273.5v4.500M1905.5 273.5v4.500M1907.5 273.5v4.500M1909.5 273.5v4.500" stroke="#161616"/><path d="M1891.5 371v4.500M1893.5 371v4.500M1895.5 371v4.500M1897.5 371v4.500M1899.5 371v4.500M1901.5 371v4.500M1903.5 371v4.500M1905.5 371v4.500M1907.5 371v4.500M1909.5 371v4.500" stroke="#161616"/><path d="M1891.5 468v4.500M1893.5 468v4.500M1895.5 468v4.500M1897.5 468v4.500M1899.5 468v4.500M1901.5 468v4.500M1903.5 468v4.500M1905.5 468v4.500M1907.5 468v4.500M1909.5 468v4.500" stroke="#161616"/><path d="M1891.5 537v4.500M1893.5 537v4.500M1895.5 537v4.500M1897.5 537v4.500M1899.5 537v4.500M1901.5 537v4.500M1903.5 537v4.500M1905.5 537v4.500M1907.5 537v4.500M1909.5 537v4.500" stroke="#161616"/><path d="M1891.5 578v4.500M1893.5 578v4.500M1895.5 578v4.500M1897.5 578v4.500M1899.5 578v4.500M1901.5 578v4.500M1903.5 578v4.500M1905.5 578v4.500M1907.5 578v4.500M1909.5 578v4.500" stroke="#161616"/><rect x="1893" y="95" width="16" height="11" fill="#e2e2e2"/><rect x="1894" y="96" width="4" height="4" fill="#2e2e2e"/><rect x="1899" y="96" width="4" height="4" fill="#4a4a4a"/><rect x="1904" y="96" width="4" height="4" fill="#8a8a8a"/><rect x="1894" y="101" width="4" height="4" fill="#6a6a6a"/><rect x="1899" y="101" width="4" height="4" fill="#5a5a5a"/><rect x="1904" y="101" width="4" height="4" fill="#3a3a3a"/><path d="M1901 121c6 0 11 3 11 7.500 0 3-2.500 3.500-4.500 3-1.500-.4-2.500.5-2 2 .3 1.500-1 2.800-3.500 2.800-6 0-10.500-3.500-10.500-8s4-7.300 9.500-7.300z" fill="#d4d4d4"/><g fill="#5a5a5a"><circle cx="1896" cy="129.500" r="1.600"/><circle cx="1900" cy="132.500" r="1.500"/><circle cx="1905" cy="131" r="1.400"/><circle cx="1908" cy="127.500" r="1.300"/><circle cx="1904.500" cy="124" r="1.200"/></g><path d="M1893.500 148v16.500h16c0-9-7-16.500-16-16.500z" fill="url(#dq)" stroke="#dcdcdc" stroke-width="1.200"/><circle cx="1899.500" cy="184.500" r="6" fill="none" stroke="#d8d8d8" stroke-width="1.500"/><path d="M1908 176l-8.500 8.500 8.500 8.500" fill="none" stroke="#d8d8d8" stroke-width="1.600"/><circle cx="1899.500" cy="184.500" r="2.500" fill="#d8d8d8"/><circle cx="1908" cy="176" r="2.400" fill="#dcdcdc"/><circle cx="1908" cy="193" r="2.400" fill="#dcdcdc"/><rect x="1898" y="227.500" width="7.500" height="7.500" fill="#cfcfcf"/><path d="M1901.500 216v11" stroke="#dcdcdc" stroke-width="1.800"/><path d="M1895.500 218.500c0 3 2 5 3.500 8.500M1908.500 219c-2 2-4 4-4.500 8" stroke="#d0d0d0" stroke-width="1.500" fill="none"/><path d="M1894.500 217.500l2.500 4.500 1.500-1.500zM1904.500 221c1-2.500 3-3.500 5.500-2.500-1 2-2 3.500-4 4z" fill="#dcdcdc"/><circle cx="1901" cy="249.500" r="3.800" fill="#d0d0d0"/><circle cx="1897" cy="254" r="3.800" fill="#d0d0d0"/><circle cx="1905" cy="254" r="3.800" fill="#d0d0d0"/><path d="M1901 253l1.500 6.500h3v1.200h-9v-1.200h3z" fill="#d0d0d0"/><rect x="1893" y="287.500" width="17" height="1" fill="#dcdcdc"/><rect x="1893" y="292" width="17" height="2" fill="#dcdcdc"/><rect x="1893" y="297" width="17" height="3" fill="#dcdcdc"/><rect x="1893.500" y="316.500" width="16" height="11" fill="url(#dg)" stroke="#d4d4d4"/><circle cx="1897.500" cy="348.500" r="5.500" fill="#cfcfcf"/><circle cx="1903" cy="353" r="5.200" fill="#7e7e7e" stroke="#e2e2e2" stroke-width="1.300"/><circle cx="1901.500" cy="391.500" r="7.700" fill="none" stroke="#dcdcdc" stroke-width="1.300" stroke-dasharray="2.600 1.700"/><circle cx="1901.500" cy="391.500" r="5" fill="#c8c8c8"/><rect x="1896.500" y="412.500" width="13" height="13" fill="none" stroke="#dcdcdc" stroke-width="1.200"/><rect x="1895.500" y="422" width="6.500" height="6" fill="#c4c4c4"/><rect x="1893.500" y="419.500" width="5.500" height="5.500" fill="#484848" stroke="#dcdcdc" stroke-width="1.100"/><rect x="1894" y="440" width="9" height="9" fill="#cfcfcf"/><rect x="1899" y="444.500" width="10" height="10" fill="url(#dl)"/><rect x="1899" y="444.500" width="4" height="4.500" fill="#8c8c8c" stroke="#e6e6e6" stroke-width=".8"/><rect x="1895.500" y="483" width="12.500" height="12" fill="none" stroke="#d0d0d0" stroke-width="1"/><g fill="#e2e2e2"><rect x="1894" y="481.5" width="2.600" height="2.600"/><rect x="1900.2" y="481.5" width="2.600" height="2.600"/><rect x="1906.5" y="481.5" width="2.600" height="2.600"/><rect x="1894" y="487.5" width="2.600" height="2.600"/><rect x="1906.5" y="487.5" width="2.600" height="2.600"/><rect x="1894" y="493.5" width="2.600" height="2.600"/><rect x="1900.2" y="493.5" width="2.600" height="2.600"/><rect x="1906.5" y="493.5" width="2.600" height="2.600"/></g><rect x="1901.300" y="488.500" width="1" height="1" fill="#e6e6e6"/><rect x="1895" y="509" width="1" height="14" fill="#d8d8d8"/><rect x="1897" y="510" width="8" height="5.500" fill="#d0d0d0"/><rect x="1897" y="517" width="12" height="5" fill="#c4c4c4"/><circle cx="1901" cy="557.500" r="8" fill="none" stroke="#cfcfcf" stroke-width="1"/><circle cx="1899.500" cy="557.500" r="7" fill="#c8c8c8"/><rect x="1899.500" y="548" width="3" height="3" fill="#e6e6e6"/><rect x="1907.500" y="556" width="3" height="3" fill="#e6e6e6"/><rect x="1899.500" y="564" width="3" height="3" fill="#e6e6e6"/><text x="1900" y="603.500" font-family="Liberation Sans, sans-serif" font-size="16" fill="#d4d4d4" text-anchor="middle">A</text><rect x="1907.200" y="590" width="1" height="16.500" fill="#d4d4d4"/><text x="1900.500" y="631.500" font-family="Liberation Sans, sans-serif" font-size="17" font-weight="bold" fill="#d4d4d4" text-anchor="middle">¶</text><text transform="translate(1901.500 662.500) scale(.78 1)" font-family="Liberation Serif, serif" font-style="italic" font-weight="bold" font-size="24" fill="#d0d0d0" text-anchor="middle">O</text></svg><!--DOCK_END-->
<div id="lp">
<div class="abs" style="left:0;top:0;width:301px;height:13px;background:#333;border-top:1px solid #424242"></div>
<svg class="abs" style="left:273px;top:4px" width="24" height="7" viewBox="0 0 24 7" fill="#dcdcdc"><path d="M3.500 0v6l-3.500-3zM7.500 0v6l-3.500-3z"/><path d="M17.500 .5l5 5M22.500 .5l-5 5" stroke="#dcdcdc" stroke-width="1.400"/></svg>
<div class="abs" style="left:0;top:13px;width:301px;height:16px;background:#353535;border-top:1px solid #2b2b2b"></div>
<div class="abs" style="left:0;top:14px;width:47px;height:15px;background:#4a4a4a"></div>
<span class="t" style="left:7px;top:17px;font-size:10px;color:#ececec;transform:scaleX(.96)">Ebenen</span>
<svg class="abs" style="left:282px;top:18px" width="16" height="8" viewBox="0 0 16 8"><path d="M0 1.500h5l-2.500 3z" fill="#dcdcdc"/><path d="M6.500 .5h8.500M6.500 2.500h8.500M6.500 4.500h8.500M6.500 6.500h8.500" stroke="#dcdcdc" stroke-width="1"/></svg>
<div class="abs" style="left:6px;top:35px;width:290px;height:326px;background:#494949;border:1px solid #343434;overflow:hidden;padding-top:1px"><div style="position:absolute;left:0;top:1px;width:288px;height:330px">
<div class="row" style="top:0px;"><svg class="abs" style="left:26px;top:5px" width="8.500" height="10.500" viewBox="0 0 10 12"><path d="M2.500 5.500v-2a2.500 2.500 0 0 1 5 0v2" fill="none" stroke="#c9c9c9" stroke-width="1.500"/><rect x=".5" y="5" width="9" height="6.500" rx=".8" fill="#c9c9c9"/><rect x="4.200" y="7" width="1.600" height="2.600" fill="#4a4a4a"/></svg><i class="cb" style="background:#138a48"></i><svg class="abs" style="left:52px;top:6px" width="8" height="10"><path d="M.5 .5v8.500l6.500-4.250z" fill="#e8e8e8"/></svg><div class="th" style="left:68px;background:#f7ecc8"><svg width="17" height="17" viewBox="0 0 17 17"><rect x="0" y="0" width="2" height="17" fill="#fff"/><rect x="15" y="0" width="2" height="17" fill="#fff"/><path d="M8.500 2.500l3.500 10h-7z" fill="#d8483a"/><rect x="4" y="13.500" width="9" height="1.500" fill="#d87838"/></svg></div><span class="t nm" style="left:91px">Vorderseite</span><svg class="abs" style="left:258px;top:5px" width="11" height="11"><circle cx="5.500" cy="5.500" r="4.200" fill="none" stroke="#d4d4d4" stroke-width="1.200"/></svg><i class="c1"></i><i class="c2"></i><i class="c3"></i></div><div class="row" style="top:21px;"><svg class="abs" style="left:3px;top:6px" width="12" height="8" viewBox="0 0 15 10"><path d="M.6 5C3 1.300 5.500.600 7.500.600S12 1.300 14.400 5C12 8.700 9.500 9.400 7.500 9.400S3 8.700.600 5z" fill="#3f3f3f" stroke="#d9d9d9" stroke-width="1.300"/><circle cx="7.500" cy="4.500" r="2.700" fill="#2a2a2a"/><circle cx="8.600" cy="3.400" r="1.100" fill="#e8e8e8"/></svg><i class="cb" style="background:#5454ee"></i><svg class="abs" style="left:51px;top:7px" width="10" height="8"><path d="M.5 .5h8.500l-4.250 6.500z" fill="#e8e8e8"/></svg><div class="th" style="left:68px"></div><span class="t nm" style="left:91px">Rückseite</span><svg class="abs" style="left:258px;top:5px" width="11" height="11"><circle cx="5.500" cy="5.500" r="4.200" fill="none" stroke="#d4d4d4" stroke-width="1.200"/></svg><div class="abs" style="left:274px;top:7px;width:8px;height:8px;background:#4a4af6;border:1px solid #15153a"></div><svg class="abs" style="left:283px;top:0" width="5" height="5"><path d="M0 0h5v5z" fill="#e8e8e8"/></svg><i class="c1"></i><i class="c2"></i><i class="c3"></i></div><div class="row" style="top:42px;background:#5a6781;"><svg class="abs" style="left:3px;top:6px" width="12" height="8" viewBox="0 0 15 10"><path d="M.6 5C3 1.300 5.500.600 7.500.600S12 1.300 14.400 5C12 8.700 9.500 9.400 7.500 9.400S3 8.700.600 5z" fill="#3f3f3f" stroke="#d9d9d9" stroke-width="1.300"/><circle cx="7.500" cy="4.500" r="2.700" fill="#2a2a2a"/><circle cx="8.600" cy="3.400" r="1.100" fill="#e8e8e8"/></svg><i class="cb" style="background:#5454ee"></i><div class="th" style="left:88px"></div><span class="t nm" style="left:111px">Weißes Rechteck</span><svg class="abs" style="left:256px;top:3px" width="15" height="15"><circle cx="7.500" cy="7.500" r="6.300" fill="none" stroke="#d4d4d4" stroke-width="1.100"/><circle cx="7.500" cy="7.500" r="4" fill="none" stroke="#d4d4d4" stroke-width="1.100"/></svg><div class="abs" style="left:274px;top:7px;width:8px;height:8px;background:#4a4af6;border:1px solid #15153a"></div><i class="c1"></i><i class="c2"></i><i class="c3"></i></div><div class="row" style="top:63px;"><svg class="abs" style="left:3px;top:6px" width="12" height="8" viewBox="0 0 15 10"><path d="M.6 5C3 1.300 5.500.600 7.500.600S12 1.300 14.400 5C12 8.700 9.500 9.400 7.500 9.400S3 8.700.600 5z" fill="#3f3f3f" stroke="#d9d9d9" stroke-width="1.300"/><circle cx="7.500" cy="4.500" r="2.700" fill="#2a2a2a"/><circle cx="8.600" cy="3.400" r="1.100" fill="#e8e8e8"/></svg><svg class="abs" style="left:26px;top:5px" width="8.500" height="10.500" viewBox="0 0 10 12"><path d="M2.500 5.500v-2a2.500 2.500 0 0 1 5 0v2" fill="none" stroke="#c9c9c9" stroke-width="1.500"/><rect x=".5" y="5" width="9" height="6.500" rx=".8" fill="#c9c9c9"/><rect x="4.200" y="7" width="1.600" height="2.600" fill="#4a4a4a"/></svg><i class="cb" style="background:#f07018"></i><svg class="abs" style="left:52px;top:6px" width="8" height="10"><path d="M.5 .5v8.500l6.500-4.250z" fill="#e8e8e8"/></svg><div class="th" style="left:68px"><svg width="17" height="17" viewBox="0 0 17 17"><rect x="2.500" y="0" width="1" height="17" fill="#e8b8a0"/><rect x="13" y="0" width="1" height="17" fill="#e8b8a0"/><rect x="7" y="7" width="2" height="2" fill="#c0c8e0"/><rect x="11" y="7" width="2" height="2" fill="#888"/><rect x="7.500" y="14" width="2" height="2" fill="#666"/></svg></div><span class="t nm" style="left:91px">Vorlage Vorderseite</span><svg class="abs" style="left:258px;top:5px" width="11" height="11"><circle cx="5.500" cy="5.500" r="4.200" fill="none" stroke="#d4d4d4" stroke-width="1.200"/></svg><i class="c1"></i><i class="c2"></i><i class="c3"></i></div><div class="row" style="top:84px;"><svg class="abs" style="left:3px;top:6px" width="12" height="8" viewBox="0 0 15 10"><path d="M.6 5C3 1.300 5.500.600 7.500.600S12 1.300 14.400 5C12 8.700 9.500 9.400 7.500 9.400S3 8.700.600 5z" fill="#3f3f3f" stroke="#d9d9d9" stroke-width="1.300"/><circle cx="7.500" cy="4.500" r="2.700" fill="#2a2a2a"/><circle cx="8.600" cy="3.400" r="1.100" fill="#e8e8e8"/></svg><svg class="abs" style="left:26px;top:5px" width="8.500" height="10.500" viewBox="0 0 10 12"><path d="M2.500 5.500v-2a2.500 2.500 0 0 1 5 0v2" fill="none" stroke="#c9c9c9" stroke-width="1.500"/><rect x=".5" y="5" width="9" height="6.500" rx=".8" fill="#c9c9c9"/><rect x="4.200" y="7" width="1.600" height="2.600" fill="#4a4a4a"/></svg><i class="cb" style="background:#f07018"></i><svg class="abs" style="left:52px;top:6px" width="8" height="10"><path d="M.5 .5v8.500l6.500-4.250z" fill="#e8e8e8"/></svg><div class="th" style="left:68px"><svg width="17" height="17" viewBox="0 0 17 17"><rect x="2.500" y="0" width="1" height="17" fill="#e8b8a0"/><rect x="13" y="0" width="1" height="17" fill="#e8b8a0"/><rect x="7" y="7" width="2" height="2" fill="#c0c8e0"/><rect x="11" y="7" width="2" height="2" fill="#888"/><rect x="7.500" y="14" width="2" height="2" fill="#666"/></svg></div><span class="t nm" style="left:91px">Vorlage Rückseite</span><svg class="abs" style="left:258px;top:5px" width="11" height="11"><circle cx="5.500" cy="5.500" r="4.200" fill="none" stroke="#d4d4d4" stroke-width="1.200"/></svg><i class="c1"></i><i class="c2"></i><i class="c3"></i></div>
</div></div>
<span class="t" style="left:5px;top:365px;font-size:10px;color:#e2e2e2">4 Ebenen</span>
<svg class="abs" style="left:158px;top:362px" width="13" height="14" viewBox="0 0 13 14"><circle cx="7.600" cy="5.700" r="4.300" fill="none" stroke="#dedede" stroke-width="1.300"/><path d="M4.600 8.800L.600 12.800" stroke="#dedede" stroke-width="1.400"/></svg>
<svg class="abs" style="left:183px;top:363px" width="12" height="12" viewBox="0 0 12 12" fill="none" stroke="#666" stroke-width="1"><rect x=".5" y=".5" width="8" height="8"/><rect x="3.500" y="3.500" width="8" height="8"/><rect x="4.500" y="4.500" width="3" height="3" fill="#666"/></svg>
<svg class="abs" style="left:207px;top:362px" width="17" height="13" viewBox="0 0 17 13"><path d="M7 3h9v9h-4v-4h-5z" fill="#686868"/><path d="M1 1v4h5M4 3l2 2-2 2" fill="none" stroke="#686868" stroke-width="1.200"/></svg>
<svg class="abs" style="left:236px;top:364px" width="12" height="12" viewBox="0 0 12 12"><path d="M.5 .5h11v11h-6.500v-4.500h-4.500z" fill="#dcdcdc"/><path d="M.8 7.800h3.700v3.700z" fill="#f2f2f2"/></svg>
<svg class="abs" style="left:262px;top:362px" width="12" height="14" viewBox="0 0 12 14"><path d="M4 1.500h4M.5 3.500h11" stroke="#dcdcdc" stroke-width="1.600" fill="none"/><path d="M1.500 5h9l-.7 8.500h-7.600z" fill="#dcdcdc"/><path d="M4 6v6.500M6 6v6.500M8 6v6.500" stroke="#4a4a4a" stroke-width=".9"/></svg>
<svg class="abs" style="left:289px;top:367px" width="11" height="11" viewBox="0 0 11 11" fill="#222"><rect x="9" y="1" width="1" height="1"/><rect x="7" y="3" width="1" height="1"/><rect x="9" y="3" width="1" height="1"/><rect x="5" y="5" width="1" height="1"/><rect x="7" y="5" width="1" height="1"/><rect x="9" y="5" width="1" height="1"/><rect x="3" y="7" width="1" height="1"/><rect x="5" y="7" width="1" height="1"/><rect x="7" y="7" width="1" height="1"/><rect x="9" y="7" width="1" height="1"/><rect x="1" y="9" width="1" height="1"/><rect x="3" y="9" width="1" height="1"/><rect x="5" y="9" width="1" height="1"/><rect x="7" y="9" width="1" height="1"/><rect x="9" y="9" width="1" height="1"/></svg>
<div class="abs" style="left:0;top:380px;width:301px;height:1px;background:#333"></div>
<svg class="abs" style="left:141px;top:382px" width="21" height="5" viewBox="0 0 21 5"><path d="M.5 0v5M2.500 0v5M4.500 0v5M6.500 0v5M8.500 0v5M10.500 0v5M12.500 0v5M14.500 0v5M16.500 0v5M18.500 0v5M20.500 0v5" stroke="#1c1c1c"/></svg>
</div>
<div class="abs" style="left:1556px;top:114px;width:296px;height:74px;border:5px solid #fe0000"></div>
<div class="abs" style="left:84px;top:28px;width:96px;height:39px;border:5px solid #fe0000"></div>
<div class="abs" style="left:1919px;top:65px;width:1px;height:975px;background:#2c2c2c"></div>
</body>
</html>
